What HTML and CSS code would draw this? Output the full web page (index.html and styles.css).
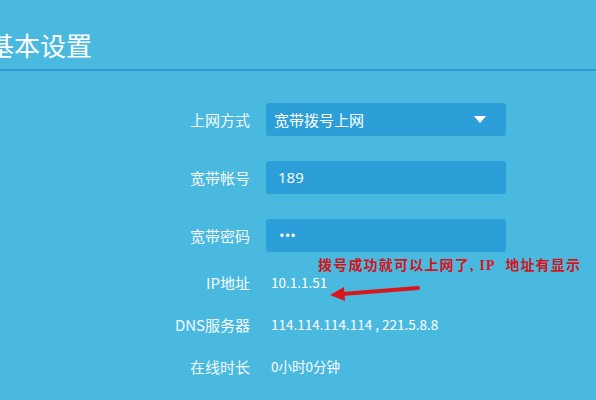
FILE: index.html
```html
<!DOCTYPE html>
<html lang="zh-CN">
<head>
    <meta charset="UTF-8">
    <meta name="viewport" content="width=device-width, initial-scale=1.0">
    <title>基本设置</title>
    <link rel="stylesheet" href="styles.css">
</head>
<body>
    <!-- Header -->
    <header class="header">
        <h1>基本设置</h1>
    </header>

    <!-- Form -->
    <div class="form">
        <div class="row row-field">
            <span class="label">上网方式</span>
            <div class="field select">
                <span>宽带拨号上网</span>
                <span class="caret"></span>
            </div>
        </div>
        <div class="row row-field">
            <span class="label">宽带帐号</span>
            <div class="field"><span>189</span></div>
        </div>
        <div class="row row-field">
            <span class="label">宽带密码</span>
            <div class="field password"><span>•••</span></div>
        </div>

        <div class="info">
            <div class="row row-info">
                <span class="label">IP地址</span>
                <span class="value">10.1.1.51</span>
            </div>
            <div class="row row-info">
                <span class="label">DNS服务器</span>
                <span class="value">114.114.114.114 , 221.5.8.8</span>
            </div>
            <div class="row row-info">
                <span class="label">在线时长</span>
                <span class="value">0小时0分钟</span>
            </div>
        </div>
    </div>

    <!-- Annotation -->
    <p class="note">拨号成功就可以上网了, IP&nbsp;&nbsp;地址有显示</p>
    <svg class="arrow" width="100" height="20" viewBox="0 0 100 20">
        <path d="M90 5 L14 11" stroke="#d8161b" stroke-width="4" stroke-linecap="round"/>
        <path d="M2 12 L16 4 L17 18 Z" fill="#d8161b"/>
    </svg>
</body>
</html>
```

FILE: styles.css
```css
/* General Styles */
body {
    margin: 0;
    padding: 0;
    background: #4ab9e0;
    color: #fff;
    font-family: "Liberation Sans", "Noto Sans CJK SC", sans-serif;
    position: relative;
    height: 400px;
    overflow: hidden;
}

.header {
    height: 69px;
    border-bottom: 2px solid #2a9ad3;
    display: flex;
    align-items: flex-end;
}

.header h1 {
    margin: 0 0 0 -12px;
    font-size: 26px;
    line-height: 26px;
    font-weight: normal;
    font-family: "Noto Sans CJK SC", sans-serif;
    padding-bottom: 11px;
}

.form {
    padding-top: 19px;
}

.row {
    display: flex;
    align-items: center;
    gap: 16px;
}

.row-field {
    height: 58px;
}

.info {
    margin-top: -3px;
}

.row-info {
    height: 42px;
}

.label {
    width: 250px;
    text-align: right;
    font-size: 15px;
    font-family: "Noto Sans CJK SC", sans-serif;
    color: #f4fafd;
}

.field {
    width: 240px;
    height: 33px;
    box-sizing: border-box;
    background: #2c9fd9;
    border-radius: 3px;
    display: flex;
    align-items: center;
    justify-content: space-between;
    padding: 0 20px 0 8px;
    font-size: 15px;
    font-family: "Noto Sans CJK SC", sans-serif;
}

.row-field:nth-child(2) .field span,
.password span {
    padding-left: 4px;
    font-family: "Open Sans", sans-serif;
}

.password span {
    padding-left: 5px;
    font-size: 15px;
    letter-spacing: 0;
}

.caret {
    width: 0;
    height: 0;
    border-left: 6px solid transparent;
    border-right: 6px solid transparent;
    border-top: 7px solid #fff;
}

.value {
    font-size: 13.5px;
    font-family: "Noto Sans CJK SC", sans-serif;
    padding-left: 5px;
    letter-spacing: 0;
}

/* Annotation overlay */
.note {
    position: absolute;
    left: 318px;
    top: 254px;
    margin: 0;
    color: #d3141a;
    font-size: 14px;
    font-weight: bold;
    font-family: "Liberation Serif", "Noto Sans CJK SC", serif;
    letter-spacing: 1.2px;
}

.arrow {
    position: absolute;
    left: 328px;
    top: 283px;
}
```
